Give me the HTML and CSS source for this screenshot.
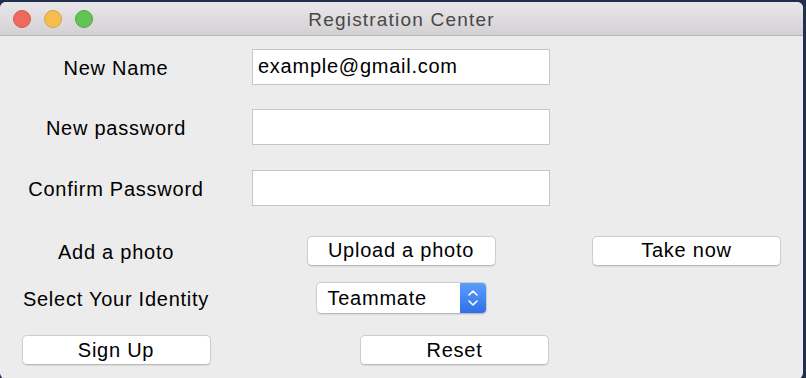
FILE: index.html
```html
<!DOCTYPE html>
<html lang="en">
<head>
  <meta charset="UTF-8" />
  <title>Registration Center</title>
  <link rel="stylesheet" href="styles.css">
</head>
<body>
  <div class="window">
    <div class="titlebar">
      <div class="lights">
        <span class="light red"></span>
        <span class="light yellow"></span>
        <span class="light green"></span>
      </div>
      <div class="title">Registration Center</div>
    </div>

    <div class="form">
      <label class="label">New Name</label>
      <input class="entry" type="text" value="example@gmail.com">
      <span></span>

      <label class="label">New password</label>
      <input class="entry" type="password" value="">
      <span></span>

      <label class="label">Confirm Password</label>
      <input class="entry" type="password" value="">
      <span></span>

      <label class="label">Add a photo</label>
      <button class="btn">Upload a photo</button>
      <button class="btn">Take now</button>

      <label class="label">Select Your Identity</label>
      <div class="popup">
        <span class="popupText">Teammate</span>
        <span class="stepper">
          <svg width="12" height="18" viewBox="0 0 12 18">
            <polyline points="2,6 6,2 10,6" fill="none" stroke="#fff" stroke-width="1.6" stroke-linecap="round" stroke-linejoin="round"/>
            <polyline points="2,12 6,16 10,12" fill="none" stroke="#fff" stroke-width="1.6" stroke-linecap="round" stroke-linejoin="round"/>
          </svg>
        </span>
      </div>
      <span></span>

      <button class="btn">Sign Up</button>
      <button class="btn reset">Reset</button>
      <span></span>
    </div>
  </div>
</body>
</html>
```

FILE: styles.css
```css
/* Desktop + window */
body {
  margin: 0;
  background: #23304d;
  font-family: "Liberation Sans", Arial, sans-serif;
  overflow: hidden;
}

.window {
  width: 803px;
  height: 377px;
  margin-top: 2px;
  background: #ececec;
  border-radius: 6px;
  overflow: hidden;
}

/* Title bar */
.titlebar {
  position: relative;
  height: 33px;
  background: linear-gradient(#e9e7e9, #d3d1d3);
  border-bottom: 1px solid #b8b6b8;
  display: flex;
  align-items: center;
  justify-content: center;
}

.lights {
  position: absolute;
  left: 13px;
  top: 8px;
  display: flex;
  gap: 13px;
}

.light {
  width: 18px;
  height: 18px;
  border-radius: 50%;
  box-sizing: border-box;
}

.red { background: #ee6a5f; border: 1px solid #d8574c; }
.yellow { background: #f5be4f; border: 1px solid #d9a33c; }
.green { background: #61c454; border: 1px solid #50a943; }

.title {
  font-size: 19px;
  letter-spacing: 1.2px;
  color: #474747;
  margin-top: 2px;
}

/* Form grid */
.form {
  display: grid;
  grid-template-columns: 232px 338px 1fr;
  grid-template-rows: 61px 60px 62px 63px 32px 72px;
  align-items: center;
  justify-items: center;
  font-size: 20px;
  letter-spacing: 0.75px;
  color: #000;
}

.label {
  white-space: nowrap;
  margin-top: 3px;
}

.entry {
  width: 298px;
  height: 36px;
  box-sizing: border-box;
  border: 1px solid #c6c6c6;
  background: #fff;
  padding: 0 5px;
  font-family: inherit;
  font-size: 20px;
  letter-spacing: 0.75px;
  color: #000;
  outline: none;
}

.btn {
  width: 189px;
  height: 30px;
  box-sizing: border-box;
  background: #fff;
  border: 1px solid #cdcdcd;
  border-bottom-color: #b9b9b9;
  border-radius: 5px;
  box-shadow: 0 1px 1px rgba(0, 0, 0, 0.08);
  font-family: inherit;
  font-size: 20px;
  letter-spacing: 0.75px;
  color: #000;
  padding: 0;
}

.reset {
  justify-self: start;
  margin-left: 128px;
}

/* Popup menu */
.popup {
  width: 171px;
  height: 32px;
  box-sizing: border-box;
  display: flex;
  background: #fff;
  border: 1px solid #cdcdcd;
  border-bottom-color: #b9b9b9;
  border-radius: 5px;
  box-shadow: 0 1px 1px rgba(0, 0, 0, 0.08);
  overflow: hidden;
}

.popupText {
  flex: 1;
  padding-left: 11px;
  line-height: 30px;
}

.stepper {
  width: 26px;
  background: linear-gradient(#5c9ef9, #2f70ea);
  display: flex;
  align-items: center;
  justify-content: center;
}
```
